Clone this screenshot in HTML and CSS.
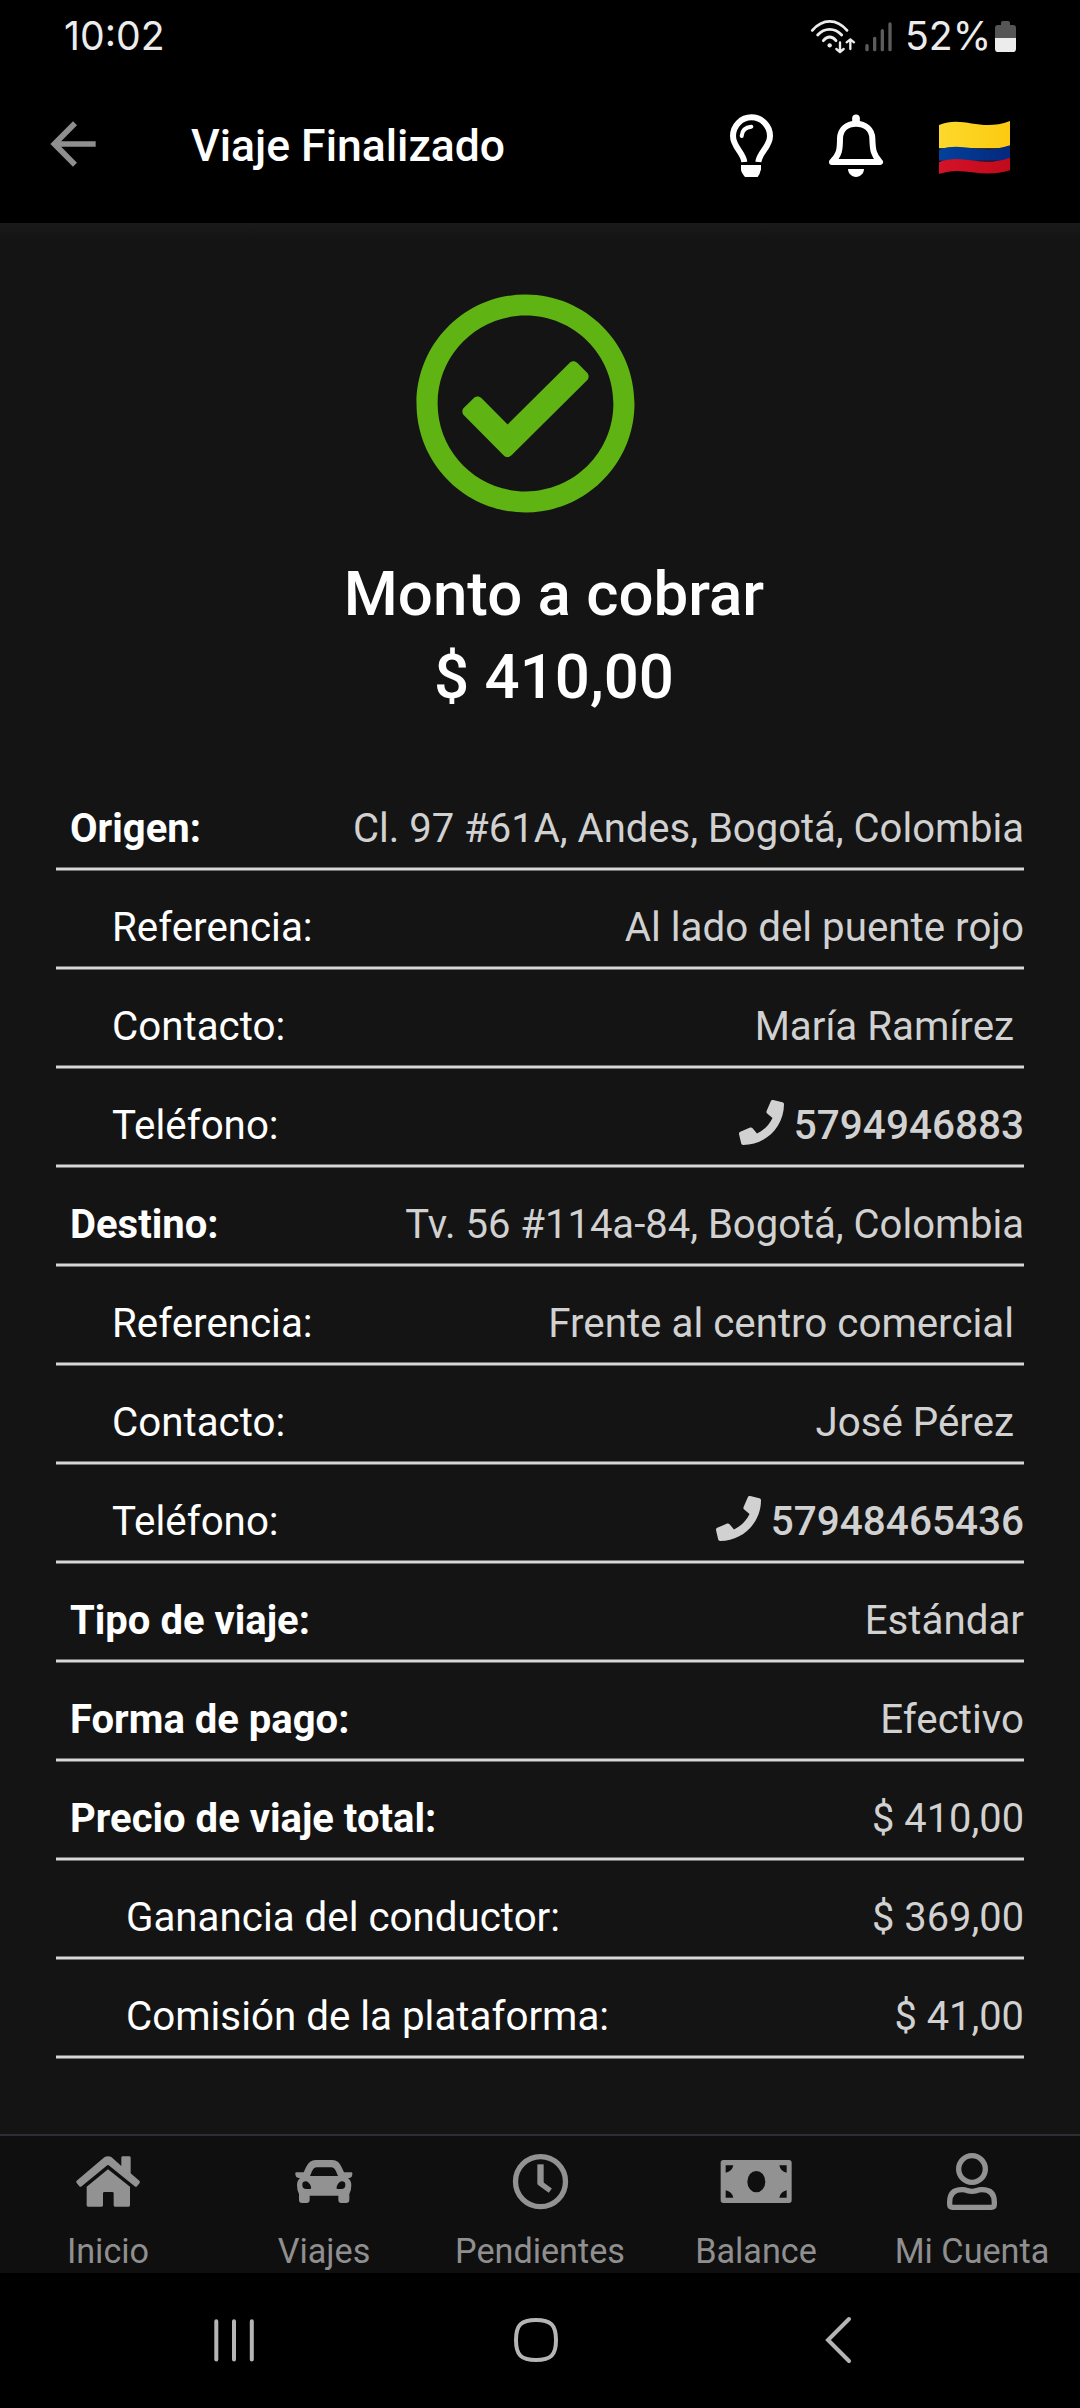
FILE: index.html
```html
<!DOCTYPE html>
<html lang="es">
<head>
<meta charset="utf-8">
<title>Viaje Finalizado</title>
<link rel="stylesheet" href="styles.css">
</head>
<body>
<div class="status-bar">
  <span class="time">10:02</span>
  <svg class="signal" viewBox="30 27 252 108" fill="none" stroke="#ececec" stroke-linecap="round" stroke-linejoin="round">
    <g stroke-width="8.5">
      <path d="M37 61Q60 34 89 34T141 61"/>
      <path d="M53 75Q68 58 89 58T125 75"/>
      <path d="M70 92Q79 81 89 81T108 92"/>
    </g>
    <circle cx="89" cy="106" r="6.5" fill="#ececec" stroke="none"/>
    <path stroke-width="7" d="M120 97V125M109 117L120 126L131 117M151 117V89M140 97L151 88L162 97"/>
    <path stroke="#5c5c5c" stroke-width="10" d="M201 107V119M224 85V119M247 62V119M270 42V119"/>
  </svg>
  <span class="percent">52%</span>
  <svg class="battery" viewBox="585 30 63 99">
    <path fill="#555" d="M585 88V54Q585 45 594 45H603V39Q603 33 609 33H624Q630 33 630 39V45H639Q648 45 648 54V88Z"/>
    <path fill="#ececec" d="M585 84H648V116Q648 126 638 126H595Q585 126 585 116Z"/>
  </svg>
</div>
<header class="app-bar">
  <svg class="back" viewBox="0 0 24 24"><path d="M20 11H7.83l5.59-5.59L12 4l-8 8 8 8 1.41-1.41L7.83 13H20v-2z"/></svg>
  <h1>Viaje Finalizado</h1>
  <svg class="bulb" viewBox="141 336 144 204" fill="none" stroke="#fff">
    <path stroke-width="18" d="M193 486C190 457 159 441 159 408A55.500 56 0 0 1 270 408C270 441 238 457 235 486"/>
    <path stroke-width="12" stroke-linecap="round" d="M185 408Q187 382 214 380"/>
    <path fill="#fff" stroke="none" d="M183 495H243V508Q240 522 233 531H195Q183 518 183 508Z"/>
  </svg>
  <svg class="bell" viewBox="441 336 174 204" fill="none" stroke="#fff" stroke-width="18" stroke-linejoin="round">
    <path d="M456 486C478 465 480 450 480 415C481 388 500 371 528 371S576 388 577 415C578 450 580 465 600 486Z"/>
    <path stroke-width="23" stroke-linecap="round" d="M528 355V364"/>
    <path fill="#fff" stroke="none" d="M504 507H552C552 520 541 531 528 531S504 520 504 507Z"/>
  </svg>
  <svg class="flag" viewBox="777 360 213 165">
    <defs>
      <linearGradient id="y"><stop offset="0" stop-color="#fdd92c"/><stop offset="1" stop-color="#fcca10"/></linearGradient>
      <linearGradient id="b"><stop offset="0" stop-color="#04419c"/><stop offset="1" stop-color="#04287c"/></linearGradient>
      <linearGradient id="r"><stop offset="0" stop-color="#d51228"/><stop offset="1" stop-color="#c00a1a"/></linearGradient>
    </defs>
    <path fill="url(#y)" d="M777 375C850 345 900 397 990 363V445H777Z"/>
    <path fill="url(#b)" d="M777 449C850 423 900 467 990 436V482H777Z"/>
    <path fill="url(#r)" d="M777 486C850 459 900 505 990 473V511C900 538 850 495 777 522Z"/>
  </svg>
</header>
<main>
  <svg class="check" viewBox="0 0 512 512"><path d="M256 8C119.033 8 8 119.033 8 256s111.033 248 248 248 248-111.033 248-248S392.967 8 256 8zm0 48c110.532 0 200 89.451 200 200 0 110.532-89.451 200-200 200-110.532 0-200-89.451-200-200 0-110.532 89.451-200 200-200m140.204 130.267l-22.536-22.718c-4.667-4.705-12.265-4.736-16.970-.068L215.346 303.697l-59.792-60.277c-4.667-4.705-12.265-4.736-16.970-.069l-22.719 22.536c-4.705 4.667-4.736 12.265-.068 16.971l90.781 91.516c4.667 4.705 12.265 4.736 16.970.068l172.589-171.204c4.704-4.668 4.734-12.266.067-16.971z"/></svg>
  <h2>Monto a cobrar<br>$ 410,00</h2>
  <dl>
    <div class="row"><dt class="strong">Origen:</dt><dd class="long">Cl. 97 #61A, Andes, Bogotá, Colombia</dd></div>
    <div class="row"><dt class="sub">Referencia:</dt><dd>Al lado del puente rojo</dd></div>
    <div class="row"><dt class="sub">Contacto:</dt><dd>María Ramírez&nbsp;</dd></div>
    <div class="row"><dt class="sub">Teléfono:</dt><dd class="phone"><svg viewBox="0 0 512 512"><path d="M493.400 24.600l-104-24c-11.300-2.600-22.900 3.300-27.500 13.900l-48 112c-4.200 9.800-1.400 21.300 6.900 28l60.600 49.600c-36 76.700-98.900 140.500-177.200 177.200l-49.600-60.600c-6.800-8.300-18.200-11.100-28-6.900l-112 48C3.900 366.500-2 378.100.6 389.400l24 104C27.100 504.200 36.700 512 48 512c256.100 0 464-207.500 464-464 0-11.200-7.700-20.900-18.600-23.400z"/></svg>5794946883</dd></div>
    <div class="row"><dt class="strong">Destino:</dt><dd class="long">Tv. 56 #114a-84, Bogotá, Colombia</dd></div>
    <div class="row"><dt class="sub">Referencia:</dt><dd>Frente al centro comercial&nbsp;</dd></div>
    <div class="row"><dt class="sub">Contacto:</dt><dd>José Pérez&nbsp;</dd></div>
    <div class="row"><dt class="sub">Teléfono:</dt><dd class="phone"><svg viewBox="0 0 512 512"><path d="M493.400 24.600l-104-24c-11.300-2.600-22.900 3.300-27.500 13.900l-48 112c-4.200 9.800-1.400 21.300 6.900 28l60.600 49.600c-36 76.700-98.900 140.500-177.200 177.200l-49.600-60.600c-6.800-8.300-18.200-11.100-28-6.900l-112 48C3.900 366.500-2 378.100.6 389.400l24 104C27.100 504.200 36.700 512 48 512c256.100 0 464-207.500 464-464 0-11.200-7.700-20.900-18.600-23.400z"/></svg>57948465436</dd></div>
    <div class="row"><dt class="strong">Tipo de viaje:</dt><dd>Estándar</dd></div>
    <div class="row"><dt class="strong">Forma de pago:</dt><dd>Efectivo</dd></div>
    <div class="row"><dt class="strong">Precio de viaje total:</dt><dd class="money">$ 410,00</dd></div>
    <div class="row"><dt class="detail">Ganancia del conductor:</dt><dd class="money">$ 369,00</dd></div>
    <div class="row"><dt class="detail">Comisión de la plataforma:</dt><dd class="money">$ 41,00</dd></div>
  </dl>
</main>
<nav class="tabs">
  <div class="tab">
    <svg viewBox="96 18 216 216"><path d="M204 49Q198 49 193 52L110 122Q107 125 110 129L118 139Q121 142 125 139L200 77Q204 73 208 77L284 139Q288 142 291 139L299 129Q301 125 298 122L272 100V53Q272 49 268 49H248Q244 49 244 53V78L215 52Q210 49 204 49Z"/><path d="M204 88L140 140V196Q140 200 144 200H185Q189 200 189 196V160Q189 156 193 156H217Q221 156 221 160V196Q221 200 225 200H266Q270 200 270 196V140Z"/></svg>
    <span>Inicio</span>
  </div>
  <div class="tab">
    <svg viewBox="746 18 216 216"><path fill-rule="evenodd" d="M793 97L800 82Q810 60 829 60H879Q898 60 907 82L914 97H936Q939 97 939 100V104Q938 113 931 114H926Q936 122 936 135Q936 152 930 162V180Q930 189 920 189H906Q897 189 897 180V167H811V180Q811 189 801 189H788Q779 189 779 180V162Q773 152 773 135Q773 122 782 114H777Q769 112 768 104V100Q768 97 771 97ZM812 108H896L890 94Q885 82 875 82H833Q823 82 818 94ZM800 124Q789 124 789 134Q789 147 801 147H812Q817 147 815 140Q810 126 800 124ZM907 124Q918 124 918 134Q918 147 906 147H895Q890 147 892 140Q897 126 907 124Z"/></svg>
    <span>Viajes</span>
  </div>
  <div class="tab">
    <svg viewBox="72 18 216 216" class="outline"><circle cx="181.500" cy="125" r="75"/><path stroke-width="19" d="M181.500 73V133"/><path d="M178 128L211 152"/></svg>
    <span>Pendientes</span>
  </div>
  <div class="tab">
    <svg viewBox="721 18 216 216"><path fill-rule="evenodd" d="M731 60H928Q936 60 936 68V181Q936 189 928 189H731Q723 189 723 181V68Q723 60 731 60ZM738 76V98Q757 96 761 76ZM921 76V98Q903 96 899 76ZM738 173V151Q757 155 761 173ZM921 173V151Q903 155 899 173ZM830 93A27 32 0 1 0 830 157A27 32 0 1 0 830 93Z"/></svg>
    <span>Balance</span>
  </div>
  <div class="tab">
    <svg viewBox="0 0 216 216" class="outline"><circle cx="108" cy="69" r="40"/><path d="M50 184Q41 184 41 175V168Q41 131 78 131Q88 131 94 134Q108 138 122 134Q128 131 138 131Q175 131 175 168V175Q175 184 166 184Z"/></svg>
    <span>Mi Cuenta</span>
  </div>
</nav>
<div class="system-nav">
  <svg class="recents" viewBox="0 0 48 48"><path d="M7.300 5.200V43.500M25 5.200V43.500M42.800 5.200V43.500"/></svg>
  <svg class="home" viewBox="0 0 48 48"><path d="M24 4C39 4 44 9 44 24S39 44 24 44S4 39 4 24S9 4 24 4Z"/></svg>
  <svg class="prev" viewBox="0 0 48 48"><path d="M35 3L14 24L35 45"/></svg>
</div>
</body>
</html>
```
FILE: styles.css
```css
* { box-sizing: border-box; margin: 0; padding: 0; }
body {
  width: 1080px;
  height: 2408px;
  display: flex;
  flex-direction: column;
  overflow: hidden;
  background: #141414;
  color: #fff;
  font-family: Roboto, "Liberation Sans", sans-serif;
}
svg { display: block; flex: none; }
.status-bar {
  height: 72px;
  flex: none;
  display: flex;
  align-items: flex-start;
  padding: 19px 64px 0 64px;
  background: #000;
  color: #ececec;
  font: 400 39.2px/34px Inter, sans-serif;
}
.time { flex: 1; }
.signal { width: 84px; height: 36px; }
.percent { width: 101px; padding-left: 11px; white-space: nowrap; }
.battery { width: 21px; height: 33px; margin-top: 1px; }
.app-bar {
  height: 151px;
  flex: none;
  display: flex;
  align-items: flex-start;
  padding: 38px 70px 0 39px;
  background: #000;
}
.back { width: 68px; height: 68px; fill: #8f8f8f; }
h1 {
  flex: 1;
  margin: 10px 0 0 84px;
  font-size: 44.5px;
  font-weight: 500;
  line-height: 52px;
}
.bulb { width: 48px; height: 68px; margin-top: 2px; }
.bell { width: 58px; height: 68px; margin: 2px 54px 0 52px; }
.flag { width: 71px; height: 55px; margin-top: 10px; }
main {
  flex: 1;
  padding: 68px 56px 0;
  background: linear-gradient(#191a19, #141414 16px);
}
.check { width: 225px; height: 225px; margin-left: 357px; fill: #5fb414; }
h2 {
  margin-top: 37px;
  padding-left: 28px;
  text-align: center;
  font-size: 61.8px;
  font-weight: 500;
  line-height: 83px;
}
dl { margin-top: 53px; }
.row {
  height: 99px;
  display: flex;
  justify-content: space-between;
  padding: 33px 0 0 14px;
  background: linear-gradient(#767474 1px, #d8d8d8 1px 3px, #767474 3px) left bottom / 100% 4px no-repeat;
  font-size: 40.3px;
  line-height: 48px;
  white-space: nowrap;
}
dd { color: #d1d1d1; }
.long { font-size: 40px; }
.money { font-size: 39.8px; }
.strong { font-size: 40px; font-weight: 700; }
.sub { padding-left: 42px; }
.detail { padding-left: 56px; }
.phone { display: flex; gap: 10px; margin-top: -1px; font-size: 40.5px; font-weight: 500; }
.phone svg { width: 45px; height: 45px; margin-top: -1px; fill: #d1d1d1; }
.tabs {
  height: 139px;
  flex: none;
  display: grid;
  grid-template-columns: repeat(5, 1fr);
  padding-top: 10px;
  border-top: 2px solid #2e2d38;
  background: #0f0f0f;
  color: #8f8f8f;
  font-size: 34.2px;
  line-height: 40px;
}
.tab { display: flex; flex-direction: column; align-items: center; gap: 13px; white-space: nowrap; }
.tab svg { width: 72px; height: 72px; fill: #929292; }
.tab .outline { fill: none; stroke: #929292; stroke-width: 16; stroke-linejoin: round; }
.system-nav {
  height: 135px;
  flex: none;
  display: flex;
  align-items: flex-start;
  padding: 43px 0 0 209px;
  background: #000;
}
.system-nav svg { width: 48px; height: 48px; fill: none; stroke: #b5b5b5; stroke-width: 4; stroke-linecap: round; }
.home { margin-left: 255px; }
.prev { margin-left: 254px; }
```
